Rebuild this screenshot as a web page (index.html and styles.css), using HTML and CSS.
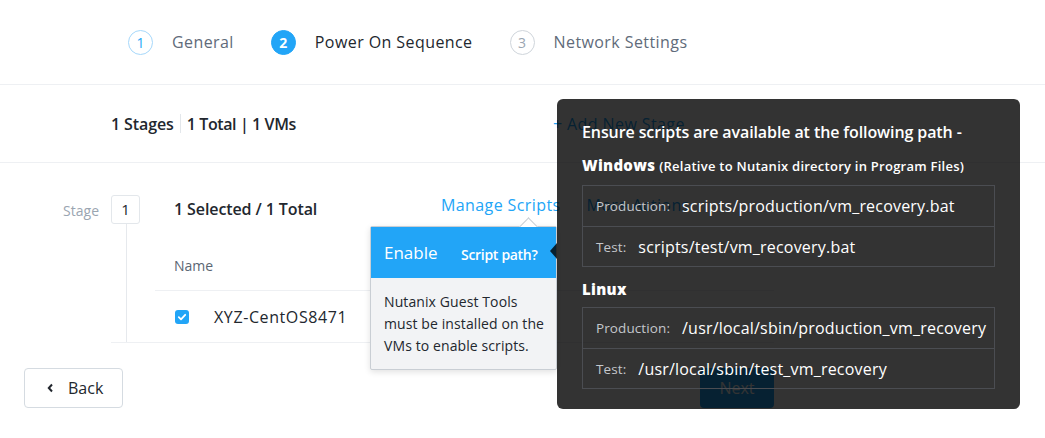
FILE: index.html
```html
<!DOCTYPE html>
<html lang="en">
<head>
<meta charset="utf-8">
<title>Power On Sequence</title>
<link rel="stylesheet" href="styles.css">
</head>
<body>
<div class="page">
  <nav class="stepper">
    <div class="step step-done"><span class="num">1</span><span class="step-label">General</span></div>
    <div class="step step-active"><span class="num">2</span><span class="step-label">Power On Sequence</span></div>
    <div class="step"><span class="num">3</span><span class="step-label">Network Settings</span></div>
  </nav>

  <div class="summary">
    <div class="counts"><span>1 Stages</span><span class="vsep"></span><span>1 Total | 1 VMs</span></div>
    <a class="link add">+ Add New Stage</a>
  </div>

  <div class="stage-wrap">
    <div class="stage-label">Stage</div>
    <div class="stage-block">
      <div class="stage-rail">
        <div class="stage-num">1</div>
        <div class="rail-line"></div>
      </div>
      <div class="stage-main">
        <div class="toolbar">
          <span class="sel">1 Selected / 1 Total</span>
          <a class="link">Manage Scripts</a>
          <a class="link more">More Actions</a>
        </div>
        <div class="thead">Name</div>
        <div class="trow">
          <span class="cb"><svg width="14" height="14" viewBox="0 0 14 14"><rect width="14" height="14" rx="3" fill="#22a5f7"/><path d="M3.8 7.2 L6 9.3 L10.2 4.8" fill="none" stroke="#fff" stroke-width="1.8" stroke-linecap="round" stroke-linejoin="round"/></svg></span>
          <span class="vm">XYZ-CentOS8471</span>
        </div>
      </div>
    </div>
  </div>

  <div class="footer">
    <button class="btn back"><svg width="7" height="10" viewBox="0 0 7 10"><path d="M5 1.5 L1.8 5 L5 8.5" fill="none" stroke="#22272e" stroke-width="2"/></svg><span>Back</span></button>
    <button class="btn next">Next</button>
  </div>

  <div class="popover">
    <div class="pop-head"><span class="pop-title">Enable</span><span class="pop-q">Script path?</span></div>
    <div class="pop-body">Nutanix Guest Tools<br>must be installed on the<br>VMs to enable scripts.</div>
  </div>

  <div class="tip">
    <div class="tip-title">Ensure scripts are available at the following path -</div>
    <div class="os"><b>Windows</b> <span class="os-note">(Relative to Nutanix directory in Program Files)</span></div>
    <div class="paths">
      <div class="path-row"><span class="pl">Production:</span><span class="pv">scripts/production/vm_recovery.bat</span></div>
      <div class="path-row"><span class="pl">Test:</span><span class="pv">scripts/test/vm_recovery.bat</span></div>
    </div>
    <div class="os os-linux"><b>Linux</b></div>
    <div class="paths">
      <div class="path-row"><span class="pl">Production:</span><span class="pv">/usr/local/sbin/production_vm_recovery</span></div>
      <div class="path-row"><span class="pl">Test:</span><span class="pv">/usr/local/sbin/test_vm_recovery</span></div>
    </div>
  </div>
</div>
</body>
</html>
```

FILE: styles.css
```css
* { box-sizing: border-box; }
body {
  margin: 0;
  font-family: "Open Sans", Lato, sans-serif;
  color: #22272e;
  background: #fff;
}
.page {
  position: relative;
  width: 1045px;
  height: 438px;
  overflow: hidden;
}
.link { color: #22a5f7; font-size: 16px; letter-spacing: 0.4px; }

/* stepper */
.stepper {
  display: flex;
  align-items: center;
  gap: 37px;
  height: 85px;
  padding-left: 128px;
  border-bottom: 1px solid #eef0f3;
}
.step {
  display: flex;
  align-items: center;
  gap: 19px;
  font-size: 16px;
  letter-spacing: 0.42px;
  color: #5f6b7a;
}
.num {
  width: 25px;
  height: 25px;
  border: 1px solid #cfd5db;
  border-radius: 50%;
  display: flex;
  align-items: center;
  justify-content: center;
  font-size: 14px;
  letter-spacing: 0;
  color: #9aa5b1;
}
.step-done .num { border-color: #a6d8fb; color: #22a5f7; }
.step-active .num { background: #22a5f7; border-color: #22a5f7; color: #fff; font-weight: 700; }
.step-active .step-label { color: #22272e; }

/* summary */
.summary {
  display: grid;
  grid-template-columns: 442px auto;
  align-items: center;
  height: 78px;
  padding-left: 111px;
  border-bottom: 1px solid #eef0f3;
}
.counts {
  display: flex;
  align-items: center;
  gap: 6px;
  font-size: 16px;
  font-weight: 600;
  letter-spacing: -0.1px;
}
.vsep { width: 1px; height: 19px; background: #e3e7eb; }
.counts span:last-child { letter-spacing: -0.4px; }

/* stage */
.stage-wrap { display: flex; padding-top: 32px; }
.stage-label {
  width: 111px;
  padding-right: 12px;
  text-align: right;
  font-size: 14px;
  line-height: 32px;
  color: #9aa5b1;
}
.stage-block {
  display: flex;
  width: 663px;
  border-bottom: 1px solid #eef0f3;
}
.stage-rail { width: 44px; display: flex; flex-direction: column; }
.stage-num {
  width: 29px;
  height: 29px;
  border: 1px solid #e3e7eb;
  border-radius: 3px;
  text-align: center;
  line-height: 27px;
  font-size: 15px;
}
.rail-line { flex: 1; width: 0; margin-left: 15px; border-left: 1px solid #e6e9ed; }
.stage-main { flex: 1; }
.toolbar {
  display: flex;
  align-items: center;
  height: 29px;
  padding-left: 19px;
}
.sel { width: 267px; font-size: 16px; font-weight: 600; letter-spacing: -0.1px; margin-top: -2px; }
.toolbar .link { margin-top: -10px; }
.more { margin-left: 26px; }
.thead {
  height: 67px;
  padding: 33px 0 0 19px;
  border-bottom: 1px solid #eef0f3;
  font-size: 14px;
  line-height: 18px;
  color: #5b6673;
}
.trow {
  display: flex;
  align-items: center;
  gap: 25px;
  height: 51px;
  padding-left: 20px;
  padding-top: 1px;
  font-size: 16px;
}
.vm { letter-spacing: 0.6px; }
.cb { display: flex; }

/* footer */
.footer {
  display: flex;
  justify-content: space-between;
  padding: 25px 271px 0 24px;
}
.btn {
  height: 40px;
  border-radius: 4px;
  font-family: inherit;
  font-size: 16px;
}
.back {
  width: 99px;
  display: flex;
  align-items: center;
  gap: 14px;
  padding-left: 22px;
  background: #fff;
  border: 1px solid #d5dbe1;
  color: #22272e;
}
.next {
  width: 74px;
  background: #22a5f7;
  border: 0;
  color: #fff;
}

/* light popover */
.popover {
  position: absolute;
  left: 370px;
  top: 226px;
  width: 187px;
  border: 1px solid #c9ced4;
  border-radius: 2px;
  background: #f2f3f5;
  box-shadow: 0 2px 6px rgba(0,0,0,0.12);
}
.popover::before {
  content: "";
  position: absolute;
  left: 151px;
  top: -7px;
  width: 12px;
  height: 12px;
  background: #fff;
  border-left: 1px solid #c9ced4;
  border-top: 1px solid #c9ced4;
  transform: rotate(45deg);
}
.pop-head {
  position: relative;
  display: flex;
  align-items: center;
  height: 51px;
  padding-left: 13px;
  background: #22a5f7;
  color: #fff;
}
.pop-title { font-size: 17px; width: 77px; }
.pop-q { font-size: 14px; font-weight: 600; letter-spacing: -0.3px; padding-top: 3px; }
.pop-body {
  padding: 13px 8px 12px 13px;
  font-size: 14px;
  line-height: 22px;
  color: #22272e;
  letter-spacing: 0.1px;
}

/* dark tooltip */
.tip {
  position: absolute;
  left: 557px;
  top: 99px;
  width: 463px;
  height: 310px;
  padding: 22px 25px 0;
  border-radius: 6px;
  background: rgba(0,0,0,0.8);
  color: #fff;
  z-index: 2;
}
.tip::before {
  content: "";
  position: absolute;
  left: -7px;
  top: 144px;
  border-top: 8px solid transparent;
  border-bottom: 8px solid transparent;
  border-right: 7px solid rgba(0,0,0,0.8);
}
.tip-title { font-size: 16px; font-weight: 600; line-height: 22px; letter-spacing: -0.1px; }
.os { margin-top: 11px; line-height: 22px; font-size: 15px; }
.os b { font-weight: 800; letter-spacing: 0.3px; }
.os-note { font-size: 13px; font-weight: 600; letter-spacing: 0.25px; }
.os-linux { margin-top: 11px; }
.paths {
  margin-top: 8px;
  border: 1px solid #4b4d52;
}
.os-linux + .paths { margin-top: 7px; }
.path-row {
  display: flex;
  align-items: center;
  gap: 12px;
  height: 40px;
  padding-left: 13px;
}
.path-row + .path-row { border-top: 1px solid #4b4d52; }
.pl { font-size: 13.5px; color: #c4c7cc; letter-spacing: 0.1px; }
.pv { font-size: 16px; letter-spacing: 0.2px; }
```
